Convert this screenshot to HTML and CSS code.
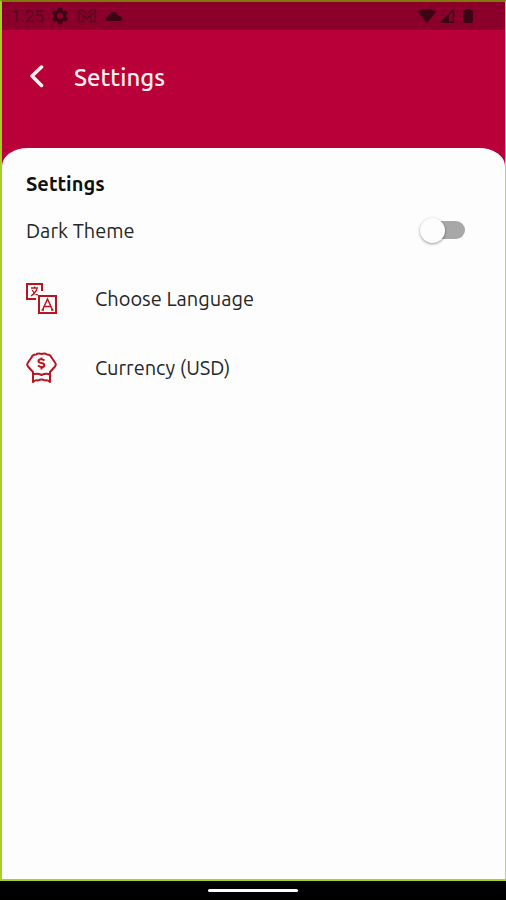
FILE: index.html
```html
<!DOCTYPE html>
<html lang="en">
<head>
  <meta charset="utf-8">
  <meta name="viewport" content="width=device-width, initial-scale=1">
  <title>Settings</title>
  <link rel="stylesheet" href="styles.css">
</head>
<body>
  <div class="app">
    <div class="status-bar">
      <span class="clock">1:25</span>
      <svg class="gear" width="18" height="18" viewBox="0 0 24 24" fill="currentColor" aria-hidden="true"><path fill-rule="evenodd" d="M9.5 1h5l.6 3.300 2 1.200 3.200-1.200 2.500 4.300-2.600 2.200v2.400l2.600 2.200-2.500 4.300-3.200-1.200-2 1.200-.6 3.300h-5l-.6-3.300-2-1.200-3.200 1.200-2.500-4.300 2.600-2.200v-2.400L1.200 8.600l2.500-4.300 3.200 1.200 2-1.200zM12 8a4 4 0 1 0 0 8 4 4 0 0 0 0-8z"/></svg>
      <svg class="mail" width="18" height="14" viewBox="0 0 18 14" fill="none" stroke="currentColor" stroke-width="1.200" aria-hidden="true"><path d="M1 13V1h3l5 4 5-4h3v12h-4V7l-4 3-4-3v6zM1 3l8 6 8-6"/></svg>
      <svg class="cloud" width="18" height="12" viewBox="0 0 18 12" fill="currentColor" aria-hidden="true"><path d="M3 11Q.5 11 .5 9Q.5 7 3.500 6.500Q4.500 2 8.500 2Q12 2 13 5.500Q17.500 6 17.500 9Q17.500 11 15 11z"/></svg>
      <div class="signals">
        <svg width="18" height="16" viewBox="0 0 18 16" fill="currentColor" aria-hidden="true"><path d="M0 4C5 0 13 0 18 4L9 15z"/></svg>
        <svg width="15" height="16" viewBox="0 0 15 16" fill="none" stroke="currentColor" stroke-width="1.500" aria-hidden="true"><path d="M1.500 14.200L13.500 2v12.200z"/><path d="M9 6.500V14H2z" fill="currentColor" stroke="none"/></svg>
        <svg class="battery" width="10" height="16" viewBox="0 0 10 16" fill="currentColor" aria-hidden="true"><path d="M3 1h4v1h1q2 0 2 2v9q0 2-2 2H2q-2 0-2-2V4q0-2 2-2h1z"/></svg>
      </div>
    </div>
    <header class="header">
      <button class="back" type="button" aria-label="Back">
        <svg width="16" height="24" viewBox="0 0 16 24" fill="none" stroke="currentColor" stroke-width="3.500" stroke-linecap="round" stroke-linejoin="round" aria-hidden="true"><path d="M13.500 2L4 11l9.500 9.500"/></svg>
      </button>
      <h1 class="title">Settings</h1>
    </header>
    <main class="sheet">
      <h2 class="section-title">Settings</h2>
      <div class="theme-row">
        <label for="dark-theme">Dark Theme</label>
        <input class="switch" id="dark-theme" type="checkbox" role="switch">
      </div>
      <button class="row" type="button">
        <svg width="32" height="32" viewBox="0 0 32 32" fill="none" stroke="currentColor" stroke-width="2" aria-hidden="true">
          <path d="M10 16H1V1h15v7"/>
          <path d="M13 13h17v17H13z"/>
          <path stroke-width="1.300" d="M5 5h7M8.500 3.500V5M11 6c-1 3-3 5-6 7M6 7c1 2 3 4 6 5"/>
          <path stroke-width="1.500" d="M16.500 27L21.500 16l5 11M18.500 23.500h6M15.500 27h2.500M25 27h2.500"/>
        </svg>
        <span>Choose Language</span>
      </button>
      <button class="row" type="button">
        <svg width="32" height="32" viewBox="0 0 32 32" fill="none" stroke="currentColor" stroke-width="2" stroke-linejoin="round" aria-hidden="true">
          <path d="M7 22V20L2 14.500Q.5 12.500 2 10.500L5.500 5.500Q6.500 2.500 10 2.500Q12 1 15.500 2Q19 1 21 2.500Q24.500 2.500 25.500 5.500L29 10.500Q30.500 12.500 29 14.500L24 20V22"/>
          <path d="M7 30V22.500Q11 21 15.500 23Q20 21 24 22.500V30Q21.500 27.500 19 28.500Q15.500 26.500 12 28.500Q9.500 27.500 7 30z"/>
          <path d="M18.500 8.500C17 7 12.500 6.500 12.500 9.200S18.300 10 18.300 13 14 15.200 12 13.500M15.500 5.500v2M15.500 14.500v3"/>
        </svg>
        <span>Currency (USD)</span>
      </button>
    </main>
  </div>
  <div class="nav-bar"><span class="home-pill"></span></div>
</body>
</html>
```
FILE: styles.css
```css
* {
  box-sizing: border-box;
}

body {
  display: flex;
  flex-direction: column;
  min-height: 100vh;
  margin: 0;
  background: #000;
  color: #262626;
  font-family: Ubuntu, "Noto Sans", sans-serif;
  font-size: 20px;
}

button {
  padding: 0;
  border: 0;
  background: none;
  color: inherit;
  font: inherit;
  cursor: pointer;
}

svg {
  flex: none;
}

.app {
  display: flex;
  flex: 1;
  flex-direction: column;
  border: 2px solid #a9cf24;
  border-top-color: #80780a;
  border-right: 1px solid #b9dc50;
  background: #ba0038;
}

.status-bar {
  display: flex;
  align-items: center;
  height: 28px;
  padding: 0 32px 0 9px;
  background: #8b002b;
  color: #3b0515;
}

.clock {
  width: 40px;
  color: #56091d;
  font-family: Roboto, sans-serif;
  font-size: 17px;
}

.mail {
  margin-left: 9px;
  color: #56091d;
}

.cloud {
  margin-left: 9px;
}

.signals {
  display: flex;
  align-items: center;
  gap: 4px;
  margin-left: auto;
}

.battery {
  margin-left: 4px;
}

.header {
  display: flex;
  align-items: center;
  gap: 30px;
  height: 118px;
  padding: 0 26px 24px;
  color: #fff0ef;
}

.back {
  display: flex;
}

.title {
  margin: 0;
  font-size: 24px;
  font-weight: 500;
}

.sheet {
  flex: 1;
  padding: 24px 24px 0;
  border-radius: 26px 26px 0 0 / 18px 18px 0 0;
  background: #fdfdfd;
}

.section-title {
  margin: 0;
  color: #111;
  font-size: 20px;
  font-weight: 700;
  line-height: 24px;
}

.theme-row {
  display: flex;
  align-items: center;
  justify-content: space-between;
  height: 68px;
  padding-right: 16px;
}

.switch {
  position: relative;
  width: 42px;
  height: 18px;
  margin: 0;
  border-radius: 9px;
  background: #a8a8a8;
  appearance: none;
  cursor: pointer;
}

.switch::before {
  position: absolute;
  top: -3px;
  left: -3px;
  width: 25px;
  height: 25px;
  border-radius: 50%;
  background: #fdfdfd;
  box-shadow: 0 1px 3px rgb(0 0 0 / 40%);
  content: "";
}

.switch:checked::before {
  left: 20px;
}

.row {
  display: flex;
  align-items: center;
  gap: 37px;
  width: 100%;
  height: 69px;
  text-align: left;
}

.row svg {
  color: #b8151f;
}

.nav-bar {
  display: flex;
  align-items: center;
  justify-content: center;
  height: 19px;
}

.home-pill {
  width: 90px;
  height: 3px;
  border-radius: 2px;
  background: #fff;
}
```
